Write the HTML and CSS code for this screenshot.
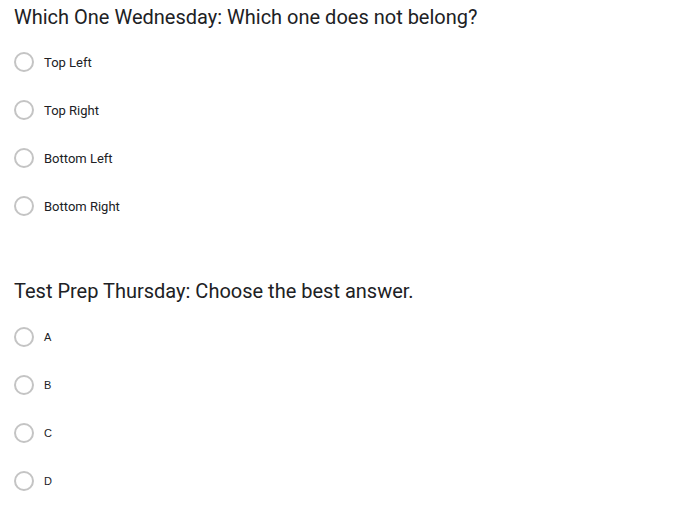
FILE: index.html
```html
<!DOCTYPE html>
<html>
<head>
<meta charset="utf-8">
<link rel="stylesheet" href="styles.css">
</head>
<body>
<section class="question">
  <h2 class="title">Which One Wednesday: Which one does not belong?</h2>
  <ul class="options">
    <li class="option"><span class="radio"></span><span class="label">Top Left</span></li>
    <li class="option"><span class="radio"></span><span class="label">Top Right</span></li>
    <li class="option"><span class="radio"></span><span class="label">Bottom Left</span></li>
    <li class="option"><span class="radio"></span><span class="label">Bottom Right</span></li>
  </ul>
</section>
<section class="question second">
  <h2 class="title">Test Prep Thursday: Choose the best answer.</h2>
  <ul class="options">
    <li class="option"><span class="radio"></span><span class="label small">A</span></li>
    <li class="option"><span class="radio"></span><span class="label small">B</span></li>
    <li class="option"><span class="radio"></span><span class="label small">C</span></li>
    <li class="option"><span class="radio"></span><span class="label small">D</span></li>
  </ul>
</section>
</body>
</html>
```

FILE: styles.css
```css
html, body {
  margin: 0;
  padding: 0;
  background: #fff;
}
body {
  padding: 0 14px;
  font-family: Roboto, "Liberation Sans", sans-serif;
  color: #202124;
}
.question {
  display: flex;
  flex-direction: column;
}
.second {
  margin-top: 44px;
}
.title {
  margin: 0;
  font-size: 20px;
  font-weight: 400;
  line-height: 34px;
  color: #202124;
}
.options {
  list-style: none;
  margin: 4px 0 0;
  padding: 0;
}
.second .options {
  margin-top: 5px;
}
.option {
  height: 48px;
  display: flex;
  align-items: center;
}
.radio {
  width: 16px;
  height: 16px;
  border: 2px solid #c4c4c4;
  border-radius: 50%;
  flex: none;
}
.label {
  margin-left: 10px;
  font-size: 13px;
  color: #202124;
}
.label.small {
  font-family: "Liberation Sans", Arial, sans-serif;
  font-size: 11px;
}
```
